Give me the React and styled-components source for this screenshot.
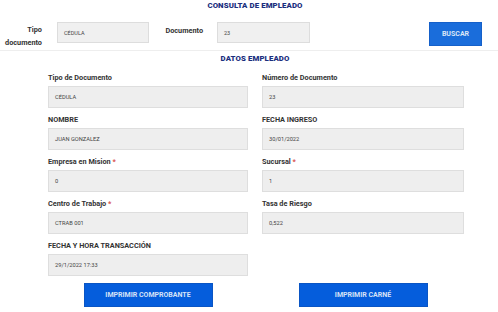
import React from "react";
import styled, { createGlobalStyle } from "styled-components";

const GlobalStyle = createGlobalStyle`
    * {
        box-sizing: border-box;
    }
    body {
        margin: 0;
        background: #ffffff;
        font-family: "Roboto", "Liberation Sans", Arial, sans-serif;
        color: #333333;
    }
`;

const fields = [
    { label: "Tipo de Documento", value: "CÉDULA" },
    { label: "Número de Documento", value: "23" },
    { label: "NOMBRE", value: "JUAN GONZALEZ" },
    { label: "FECHA INGRESO", value: "30/01/2022" },
    { label: "Empresa en Mision", value: "0", required: true },
    { label: "Sucursal", value: "1", required: true },
    { label: "Centro de Trabajo", value: "CTRAB 001", required: true },
    { label: "Tasa de Riesgo", value: "0,522" },
    { label: "FECHA Y HORA TRANSACCIÓN", value: "29/1/2022 17:33" },
];

function App() {
    return (
        <>
            <GlobalStyle />
            <Page>
                <Title>CONSULTA DE EMPLEADO</Title>
                <SearchRow>
                    <SearchLabel $width={42}>
                        Tipo
                        <br />
                        documento
                    </SearchLabel>
                    <SearchInput $width={92}>CÉDULA</SearchInput>
                    <SearchLabel $width={40} $single>
                        Documento
                    </SearchLabel>
                    <SearchInput $width={93}>23</SearchInput>
                    <Spacer />
                    <BuscarButton>BUSCAR</BuscarButton>
                </SearchRow>
                <Divider />
                <SubTitle>DATOS EMPLEADO</SubTitle>
                <Grid>
                    {fields.map((f) => (
                        <Field key={f.label}>
                            <Label>
                                {f.label}
                                {f.required && <Required> *</Required>}
                            </Label>
                            <Input>{f.value}</Input>
                        </Field>
                    ))}
                    <Empty />
                    <ButtonCell>
                        <PrintButton>IMPRIMIR COMPROBANTE</PrintButton>
                    </ButtonCell>
                    <ButtonCell>
                        <PrintButton>IMPRIMIR CARNÉ</PrintButton>
                    </ButtonCell>
                </Grid>
            </Page>
        </>
    );
}

const Page = styled.div`
    width: 498px;
    height: 312px;
    overflow: hidden;
    padding-top: 1px;
`;

const Title = styled.h1`
    margin: 0;
    padding-left: 12px;
    text-align: center;
    font-size: 7.8px;
    line-height: 9px;
    font-weight: 900;
    color: #1b2f7e;
    letter-spacing: 0.1px;
`;

const SearchRow = styled.div`
    display: flex;
    align-items: flex-start;
    margin-top: 12px;
    padding-right: 16px;
    height: 28px;
`;

const SearchLabel = styled.div`
    width: ${(p) => p.$width}px;
    margin-left: ${(p) => (p.$single ? 14 : 0)}px;
    margin-right: ${(p) => (p.$single ? 14 : 15)}px;
    padding-top: ${(p) => (p.$single ? 2 : 1)}px;
    text-align: right;
    font-size: 7.3px;
    line-height: 13px;
    font-weight: 700;
    color: #333333;
    white-space: nowrap;
`;

const SearchInput = styled.div`
    width: ${(p) => p.$width}px;
    height: 21px;
    display: flex;
    align-items: center;
    padding-left: 6px;
    background: #f0f0f0;
    border: 1px solid #dddddd;
    font-size: 5.5px;
    color: #444444;
`;

const Spacer = styled.div`
    flex: 1;
`;

const BuscarButton = styled.button`
    width: 53px;
    height: 24px;
    border: 1px solid #1560c9;
    background: #1a6ddb;
    color: #dbe6f7;
    font-family: inherit;
    font-size: 7px;
    font-weight: 700;
    padding: 0;
`;

const Divider = styled.div`
    height: 1px;
    background: #eeeeee;
`;

const SubTitle = styled.h2`
    margin: 3px 0 0;
    padding-left: 12px;
    text-align: center;
    font-size: 7.8px;
    line-height: 9px;
    font-weight: 900;
    color: #1b2f7e;
    letter-spacing: 0.1px;
`;

const Grid = styled.div`
    display: grid;
    grid-template-columns: 200px 202px;
    column-gap: 14px;
    row-gap: 7px;
    margin-top: 10px;
    padding-left: 48px;
`;

const Field = styled.div`
    display: flex;
    flex-direction: column;
`;

const Label = styled.div`
    font-size: 7.3px;
    line-height: 10px;
    font-weight: 700;
    color: #333333;
    margin-bottom: 3px;
    white-space: nowrap;
`;

const Required = styled.span`
    color: #d9534f;
`;

const Input = styled.div`
    height: 22px;
    display: flex;
    align-items: center;
    padding-left: 6px;
    background: #eeeeee;
    border: 1px solid #dedede;
    font-size: 5.7px;
    color: #444444;
`;

const Empty = styled.div``;

const ButtonCell = styled.div`
    display: flex;
    justify-content: center;
`;

const PrintButton = styled.button`
    width: 129px;
    height: 24px;
    border: 1px solid #0a55c4;
    background: #055ddc;
    color: #d6e2f7;
    font-family: inherit;
    font-size: 7px;
    font-weight: 700;
    padding: 0;
`;

export default App;
